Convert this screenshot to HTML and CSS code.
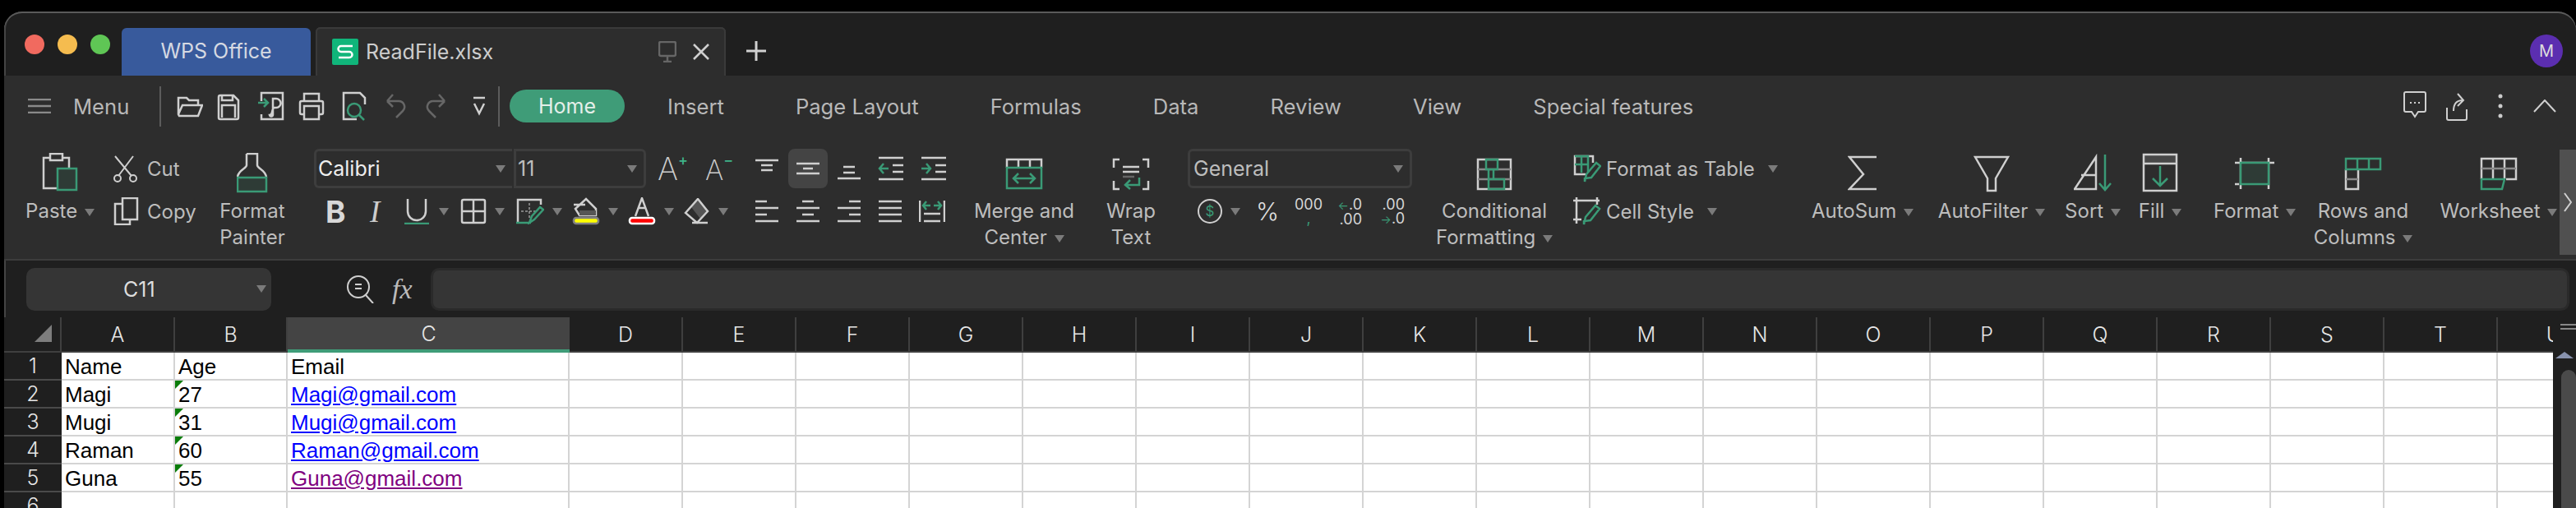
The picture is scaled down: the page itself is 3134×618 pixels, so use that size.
FILE: index.html
```html
<!DOCTYPE html>
<html lang="en">
<head>
  <meta charset="UTF-8">
  <title>ReadFile.xlsx</title>
  <link rel="stylesheet" href="styles.css">
</head>
<body>
<div class="window">

  <!-- title bar -->
  <div class="titlebar">
    <div class="lights"><i class="red"></i><i class="yellow"></i><i class="green"></i></div>
    <div class="tab-home">WPS Office</div>
    <div class="tab-file">
      <svg class="s-logo" width="32" height="32" viewBox="0 0 32 32"><rect width="32" height="32" rx="2" fill="#10b57a"/><path d="M25 9H11a3.5 3.5 0 0 0 0 7h10a3.500 3.500 0 0 1 0 7H8" fill="none" stroke="#fff" stroke-width="2.500"/></svg>
      <span class="file-name">ReadFile.xlsx</span>
      <svg class="pin" width="22" height="26" viewBox="0 0 22 26"><rect x="1" y="1" width="20" height="17" rx="2" class="ln dim"/><path d="M11 18v6M6 25h10" class="ln dim"/></svg>
      <svg class="close" width="20" height="20" viewBox="0 0 20 20"><path d="M1 1l18 18M19 1L1 19" class="ln"/></svg>
    </div>
    <svg class="plus" width="24" height="24" viewBox="0 0 24 24"><path d="M12 0v24M0 12h24" fill="none" stroke="#d0d0d0" stroke-width="3"/></svg>
    <div class="avatar">M</div>
  </div>

  <div class="ribbon">
    <!-- menu line -->
    <div class="nav">
      <svg class="burger" width="28" height="18" viewBox="0 0 28 18"><path d="M0 1h28M0 9h28M0 17h28" class="ln mid"/></svg>
      <span class="menu-text">Menu</span>
      <i class="sep"></i>
      <div class="quick">
        <svg width="32" height="36" viewBox="0 0 32 36"><path d="M2 28V8h10l3 3h11v6M2 28l5-11h24l-5 13H3z" class="ln"/></svg>
        <svg width="28" height="36" viewBox="0 0 28 36"><path d="M2 7a2 2 0 0 1 2-2h16l6 6v21a2 2 0 0 1-2 2H4a2 2 0 0 1-2-2zM6 5v6h13V5M6 32V17h16v15" class="ln"/></svg>
        <svg width="32" height="36" viewBox="0 0 32 36"><path d="M4 12V2h26v32H4v-6M14 29c4 0 2-5 5-9h3a5 5 0 0 0 0-11h-4v19a2 2 0 0 1-4 1z" class="ln"/><path d="M0 14h11M7 9l5 5-5 5" class="ln gr"/></svg>
        <svg width="32" height="36" viewBox="0 0 32 36"><path d="M7 12V3h18v9M7 28H4a2 2 0 0 1-2-2V14a2 2 0 0 1 2-2h24a2 2 0 0 1 2 2v12a2 2 0 0 1-2 2h-3M7 18h18v16H7z" class="ln"/></svg>
        <svg width="30" height="36" viewBox="0 0 30 36"><path d="M18 34H2V2h20l6 6v8" class="ln"/><circle cx="15" cy="23" r="8" class="ln gr"/><path d="M21 29l6 6" class="ln gr"/></svg>
        <svg width="24" height="36" viewBox="0 0 24 36"><path d="M1 12h14a7 7 0 0 1 5 12l-8 8M1 12l7-8M1 12l7 7" class="ln dim"/></svg>
        <svg width="24" height="36" viewBox="0 0 24 36"><path d="M23 12H9a7 7 0 0 0-5 12l8 8M23 12l-7-8M23 12l-7 7" class="ln dim"/></svg>
        <svg width="16" height="36" viewBox="0 0 16 36"><path d="M1 8h14M2 15l6 12 6-12" class="ln"/></svg>
      </div>
      <i class="sep"></i>
      <span class="pill">Home</span>
      <span class="nav-tab first">Insert</span>
      <span class="nav-tab">Page Layout</span>
      <span class="nav-tab">Formulas</span>
      <span class="nav-tab">Data</span>
      <span class="nav-tab">Review</span>
      <span class="nav-tab">View</span>
      <span class="nav-tab">Special features</span>
      <div class="nav-right">
        <svg width="28" height="36" viewBox="0 0 28 36"><path d="M3 1h22a2 2 0 0 1 2 2v20a2 2 0 0 1-2 2h-7l-4 6-4-6H3a2 2 0 0 1-2-2V3a2 2 0 0 1 2-2z" class="ln thin"/><path d="M8 14h2M13 14h2M18 14h2" class="ln thin"/></svg>
        <svg class="share" width="26" height="36" viewBox="0 0 26 36"><path d="M1 20v13a2 2 0 0 0 2 2h20a2 2 0 0 0 2-2V22M9 24c0-9 4-13 11-13M14 3l7 8-7 7" class="ln thin"/></svg>
        <svg class="wide" width="6" height="30" viewBox="0 0 6 30"><circle cx="3" cy="3" r="2.500" fill="#ccc"/><circle cx="3" cy="15" r="2.500" fill="#ccc"/><circle cx="3" cy="27" r="2.500" fill="#ccc"/></svg>
        <svg class="wide" width="28" height="16" viewBox="0 0 28 16"><path d="M1 15L14 1l13 14" class="ln thin"/></svg>
      </div>
    </div>

    <!-- tool groups -->
    <div class="tools">
      <div class="big">
        <svg width="44" height="50" viewBox="0 0 44 50"><path d="M10 6H2v37h18M25 6h8v13M10 1h15v8H10z" class="ln"/><rect x="19" y="19" width="23" height="26" class="ln gr box"/></svg>
        <div class="lbl">Paste <i class="arr"></i></div>
      </div>

      <div class="clip">
        <div class="row">
          <svg width="32" height="34" viewBox="0 0 32 34"><path d="M2 2l20 24M24 2L6 26" class="ln thin"/><circle cx="5" cy="29" r="4" class="ln thin"/><circle cx="24" cy="29" r="4" class="ln thin"/></svg>
          <span>Cut</span>
        </div>
        <div class="row">
          <svg width="32" height="34" viewBox="0 0 32 34"><path d="M11 1h18v26H11zM11 8H2v25h18v-6" class="ln"/></svg>
          <span>Copy</span>
        </div>
      </div>

      <div class="big">
        <svg width="38" height="50" viewBox="0 0 38 50"><path d="M12 1h13v14c0 4 11 6 11 15M12 1v14C12 19 1 21 1 30" class="ln"/><rect x="1" y="30" width="35" height="17" class="ln gr box"/></svg>
        <div class="lbl">Format</div>
        <div class="lbl">Painter</div>
      </div>

      <div class="font-group">
        <div class="row font-row">
          <div class="select font-name"><span>Calibri</span><i class="arr"></i></div>
          <div class="select font-size"><span>11</span><i class="arr"></i></div>
          <span class="grow-a">A<b>+</b></span>
          <span class="shrink-a">A<b>−</b></span>
        </div>
        <div class="row fmt-row">
          <span class="bold">B</span>
          <span class="ital">I</span>
          <span class="drop under">
            <svg width="32" height="32" viewBox="0 0 32 32"><path d="M4 1v15a11 11 0 0 0 22 0V1" class="ln"/><path d="M0 31h30" class="ln gr"/></svg><i class="arr"></i>
          </span>
          <span class="drop">
            <svg width="32" height="32" viewBox="0 0 32 32"><rect x="2" y="2" width="28" height="28" rx="2" class="ln"/><path d="M16 2v28M2 16h28" class="ln"/></svg><i class="arr"></i>
          </span>
          <span class="drop">
            <svg width="34" height="32" viewBox="0 0 34 32"><path d="M2 29V2h28v6" class="ln"/><path d="M6 16h20M16 6v20" class="ln dash"/><path d="M0 30h18M16 30l3-8 10-11 4 3-11 12z" class="ln gr"/></svg><i class="arr"></i>
          </span>
          <span class="drop">
            <svg width="34" height="34" viewBox="0 0 34 34"><path d="M4 14l13-12 12 12v8H9zM2 9h14" class="ln"/><path d="M9 16h20v6H9z" fill="#555"/><rect x="2" y="25" width="30" height="7" rx="3" fill="#ff0" stroke="#808080" stroke-width="2.500"/></svg><i class="arr"></i>
          </span>
          <span class="drop">
            <svg width="34" height="34" viewBox="0 0 34 34"><path d="M9 23L17 1l8 22M12 13h10" class="ln"/><rect x="2" y="25" width="30" height="7" rx="3" fill="#f00" stroke="#fff" stroke-width="2.500"/></svg><i class="arr"></i>
          </span>
          <span class="drop">
            <svg width="32" height="32" viewBox="0 0 32 32"><path d="M17 1l12 15-9 9L9 11z" fill="#555"/><path d="M2 18L17 1l12 15-13 14zM10 30h19" class="ln"/></svg><i class="arr"></i>
          </span>
        </div>
      </div>

      <div class="align-group">
        <div class="row">
          <svg width="30" height="32" viewBox="0 0 30 32"><path d="M1 6h28M8 12h14M8 18h14" class="ln"/></svg>
          <span class="align-on"><svg width="30" height="32" viewBox="0 0 30 32"><path d="M1 10h28M9 16h12M1 22h28" class="ln"/></svg></span>
          <svg width="30" height="32" viewBox="0 0 30 32"><path d="M8 14h14M8 21h14M1 28h28" class="ln"/></svg>
          <svg width="32" height="32" viewBox="0 0 32 32"><path d="M1 3h30M18 12h13M18 20h13M1 29h30" class="ln"/><path d="M13 16H2M7 10l-5 6 5 6" class="ln gr"/></svg>
          <svg width="32" height="32" viewBox="0 0 32 32"><path d="M1 3h30M18 12h13M18 20h13M1 29h30" class="ln"/><path d="M1 16h11M7 10l5 6-5 6" class="ln gr"/></svg>
        </div>
        <div class="row">
          <svg width="30" height="30" viewBox="0 0 30 30"><path d="M1 3h14M1 11h28M1 19h14M1 27h28" class="ln"/></svg>
          <svg width="30" height="30" viewBox="0 0 30 30"><path d="M8 3h14M1 11h28M8 19h14M1 27h28" class="ln"/></svg>
          <svg width="30" height="30" viewBox="0 0 30 30"><path d="M15 3h14M1 11h28M15 19h14M1 27h28" class="ln"/></svg>
          <svg width="30" height="30" viewBox="0 0 30 30"><path d="M1 3h28M1 11h28M1 19h28M1 27h28" class="ln"/></svg>
          <svg width="32" height="30" viewBox="0 0 32 30"><path d="M1 2v26M31 2v26M6 18h20M6 27h20" class="ln"/><path d="M5 8h9M9 3L5 8l4 5M18 8h9M23 3l4 5-4 5" class="ln gr"/></svg>
        </div>
      </div>

      <div class="big">
        <svg width="46" height="50" viewBox="0 0 46 50"><path d="M2 18V8h42v10M16 8v10M30 8v10" class="ln"/><rect x="2" y="18" width="42" height="25" class="ln gr"/><path d="M11 31h24M16 25l-6 6 6 6M30 25l6 6-6 6" class="ln gr"/></svg>
        <div class="lbl">Merge and</div>
        <div class="lbl">Center <i class="arr"></i></div>
      </div>

      <div class="big">
        <svg width="46" height="50" viewBox="0 0 46 50"><path d="M9 8H2v10M37 8h7v10M2 34v10h7M44 34v10h-7M13 17h20M13 23h20" class="ln"/><path d="M13 29h14" class="ln dim"/><path d="M33 30v9H17M22 33l-6 6 6 5" class="ln gr"/></svg>
        <div class="lbl">Wrap</div>
        <div class="lbl">Text</div>
      </div>

      <div class="number-group">
        <div class="row">
          <div class="select num-format"><span>General</span><i class="arr"></i></div>
        </div>
        <div class="row num-row">
          <span class="drop dollar"><span class="dollar-sign">$</span><i class="arr"></i></span>
          <span class="percent">%</span>
          <span class="stack thousands">000<br><b>,</b></span>
          <span class="stack dec"><b>←</b>.0<br>.00</span>
          <span class="stack dec right">.00<br><b>→</b>.0</span>
        </div>
      </div>

      <div class="big">
        <svg width="44" height="50" viewBox="0 0 44 50"><rect x="2" y="8" width="40" height="36" class="ln"/><path d="M2 20h40M2 32h40" class="ln mid"/><path d="M12 8h14v12H12zM15 20h6v12h-6zM15 32h19v12H15z" class="ln gr"/></svg>
        <div class="lbl">Conditional</div>
        <div class="lbl">Formatting <i class="arr"></i></div>
      </div>

      <div class="style-group">
        <div class="row">
          <svg width="34" height="34" viewBox="0 0 34 34"><path d="M15 24H2V2h22v8" class="ln"/><path d="M2 12h16M2 2h16v20M10 2v20" class="ln gr"/><path d="M14 33l2-9 12-14 5 4-11 14-8 1z" class="ln gr"/></svg>
          <span>Format as Table</span><i class="arr"></i>
        </div>
        <div class="row">
          <svg width="34" height="34" viewBox="0 0 34 34"><path d="M0 4h32M4 0v32M29 0v9M0 27h10" class="ln"/><path d="M13 33l2-9 12-14 5 4-11 14-8 1z" class="ln gr"/></svg>
          <span>Cell Style</span><i class="arr"></i>
        </div>
      </div>

      <div class="big">
        <svg width="36" height="50" viewBox="0 0 36 50"><path d="M35 5H2l17 21L2 44h33" class="ln"/></svg>
        <div class="lbl">AutoSum <i class="arr"></i></div>
      </div>
      <div class="big">
        <svg width="44" height="50" viewBox="0 0 44 50"><path d="M2 5h40L27 31v15H17V31z" class="ln"/></svg>
        <div class="lbl">AutoFilter <i class="arr"></i></div>
      </div>
      <div class="big">
        <svg width="46" height="50" viewBox="0 0 46 50"><path d="M1 44h26V5zM9 27h18" class="ln"/><path d="M38 2v43M31 37l7 8 7-8" class="ln gr"/></svg>
        <div class="lbl">Sort <i class="arr"></i></div>
      </div>
      <div class="big">
        <svg width="44" height="50" viewBox="0 0 44 50"><path d="M2 2h40v11H2z" fill="#484848"/><rect x="2" y="2" width="40" height="44" class="ln"/><path d="M2 13h40" class="ln"/><path d="M22 16v24M13 31l9 9 9-9" class="ln gr"/></svg>
        <div class="lbl">Fill <i class="arr"></i></div>
      </div>
      <div class="big">
        <svg width="48" height="50" viewBox="0 0 48 50"><path d="M7 6v38M41 6v38M0 12h48M0 38h5" class="ln"/><rect x="7" y="12" width="34" height="26" class="ln gr box"/></svg>
        <div class="lbl">Format <i class="arr"></i></div>
      </div>
      <div class="big">
        <svg width="46" height="50" viewBox="0 0 46 50"><path d="M2 20v24h15V20" class="ln"/><path d="M2 32h15" class="ln mid"/><path d="M2 7h42v13H2zM16 7v13M30 7v13" class="ln gr"/></svg>
        <div class="lbl">Rows and</div>
        <div class="lbl">Columns <i class="arr"></i></div>
      </div>
      <div class="big worksheet">
        <svg width="46" height="50" viewBox="0 0 46 50"><path d="M2 32V7h42v25H32M16 7v25M30 7v25" class="ln"/><path d="M2 19h42" class="ln mid"/><path d="M2 32h28l-3 12H2z" class="ln gr"/></svg>
        <div class="lbl">Worksheet <i class="arr"></i></div>
      </div>
    </div>

    <div class="more"><svg width="10" height="24" viewBox="0 0 10 24"><path d="M1 1l8 11-8 11" class="ln thin"/></svg></div>
  </div>

  <!-- formula bar -->
  <div class="formula">
    <div class="name-box"><span>C11</span><i class="arr"></i></div>
    <svg class="lookup" width="34" height="34" viewBox="0 0 34 34"><circle cx="14" cy="14" r="13" class="ln thin"/><path d="M10 11h8M10 16h8" class="ln thin"/><path d="M23 24l9 10" class="ln thin"/></svg>
    <span class="fx">fx</span>
    <div class="formula-input"></div>
  </div>

  <!-- sheet -->
  <div class="sheet">
    <div class="grid-wrap">
      <table class="grid">
        <colgroup>
          <col class="c-rowhead"><col class="c-a"><col class="c-b"><col class="c-c">
          <col class="c-n"><col class="c-n"><col class="c-n"><col class="c-n"><col class="c-n"><col class="c-n"><col class="c-n"><col class="c-n"><col class="c-n"><col class="c-n"><col class="c-n"><col class="c-n"><col class="c-n"><col class="c-n"><col class="c-n"><col class="c-n"><col class="c-n"><col class="c-n">
        </colgroup>
        <thead>
          <tr>
            <th class="corner"><i></i></th><th>A</th><th>B</th><th class="sel">C</th><th>D</th><th>E</th><th>F</th><th>G</th><th>H</th><th>I</th><th>J</th><th>K</th><th>L</th><th>M</th><th>N</th><th>O</th><th>P</th><th>Q</th><th>R</th><th>S</th><th>T</th><th>U</th>
          </tr>
        </thead>
        <tbody>
          <tr><th>1</th><td>Name</td><td>Age</td><td>Email</td><td></td><td></td><td></td><td></td><td></td><td></td><td></td><td></td><td></td><td></td><td></td><td></td><td></td><td></td><td></td><td></td><td></td><td></td></tr>
          <tr><th>2</th><td>Magi</td><td class="flag">27</td><td><a class="link">Magi@gmail.com</a></td><td></td><td></td><td></td><td></td><td></td><td></td><td></td><td></td><td></td><td></td><td></td><td></td><td></td><td></td><td></td><td></td><td></td><td></td></tr>
          <tr><th>3</th><td>Mugi</td><td class="flag">31</td><td><a class="link">Mugi@gmail.com</a></td><td></td><td></td><td></td><td></td><td></td><td></td><td></td><td></td><td></td><td></td><td></td><td></td><td></td><td></td><td></td><td></td><td></td><td></td></tr>
          <tr><th>4</th><td>Raman</td><td class="flag">60</td><td><a class="link">Raman@gmail.com</a></td><td></td><td></td><td></td><td></td><td></td><td></td><td></td><td></td><td></td><td></td><td></td><td></td><td></td><td></td><td></td><td></td><td></td><td></td></tr>
          <tr><th>5</th><td>Guna</td><td class="flag">55</td><td><a class="link visited">Guna@gmail.com</a></td><td></td><td></td><td></td><td></td><td></td><td></td><td></td><td></td><td></td><td></td><td></td><td></td><td></td><td></td><td></td><td></td><td></td><td></td></tr>
          <tr><th>6</th><td></td><td></td><td></td><td></td><td></td><td></td><td></td><td></td><td></td><td></td><td></td><td></td><td></td><td></td><td></td><td></td><td></td><td></td><td></td><td></td><td></td></tr>
        </tbody>
      </table>
    </div>
    <div class="vscroll">
      <div class="split"></div>
      <div class="up"></div>
      <div class="thumb"></div>
    </div>
  </div>

</div>
</body>
</html>
```

FILE: styles.css
```css
html, body {
  margin: 0;
  height: 618px;
  overflow: hidden;
  background: #000;
  font-family: "Inter", "Noto Sans", sans-serif;
}

.window {
  margin: 14px 0 0 5px;
  height: 604px;
  display: flex;
  flex-direction: column;
  background: #1f1f1f;
  border-radius: 22px 22px 0 0;
  box-shadow: inset 0 2px 0 #5a5a5a, inset 2px 0 0 #444;
  overflow: hidden;
}

/* line icons */
.ln {
  fill: none;
  stroke: #cfcfcf;
  stroke-width: 2.5;
}
.ln.thin { stroke-width: 2; }
.ln.gr { stroke: #3a9a76; }
.ln.dim { stroke: #666; }
.ln.mid { stroke: #8a8a8a; }
.ln.box { fill: #2e3b36; }
.ln.dash { stroke-dasharray: 3 2; stroke: #999; stroke-width: 1.500; }

/* little dropdown triangle */
.arr {
  display: inline-block;
  width: 0;
  height: 0;
  border-left: 6px solid transparent;
  border-right: 6px solid transparent;
  border-top: 9px solid #7b7b7b;
  vertical-align: middle;
}

/* title bar */
.titlebar {
  height: 78px;
  flex: none;
  display: flex;
  align-items: flex-end;
  box-sizing: border-box;
}
.lights {
  display: flex;
  gap: 16px;
  padding: 0 0 26px 25px;
}
.lights i {
  width: 24px;
  height: 24px;
  border-radius: 50%;
}
.lights .red { background: #f16a5f; }
.lights .yellow { background: #f5bc4f; }
.lights .green { background: #5fc655; }
.tab-home {
  margin-left: 14px;
  width: 230px;
  height: 58px;
  background: #385a9c;
  border-radius: 6px 6px 0 0;
  color: #d5d9e2;
  font-size: 25px;
  text-align: center;
  line-height: 56px;
}
.tab-file {
  margin-left: 6px;
  width: 499px;
  height: 59px;
  box-sizing: border-box;
  display: flex;
  align-items: center;
  padding: 0 20px 0 20px;
  background: #2d2d2d;
  border-radius: 6px 6px 0 0;
  box-shadow: inset 0 2px 0 #3a3a3a, inset 2px 0 0 #3a3a3a, inset -2px 0 0 #3a3a3a;
  color: #cdcdcd;
  font-size: 25px;
}
.file-name {
  margin-left: 9px;
  flex: 1;
}
.close { margin-left: 20px; }
.plus {
  margin: 0 0 18px 25px;
}
.avatar {
  margin: 0 16px 10px auto;
  width: 40px;
  height: 40px;
  border-radius: 50%;
  background: #5b2eb0;
  color: #ddd;
  font-size: 20px;
  line-height: 40px;
  text-align: center;
}

/* ribbon */
.ribbon {
  position: relative;
  flex: none;
  height: 225px;
  box-sizing: border-box;
  background: #2d2d2d;
  border-bottom: 2px solid #3c3c3c;
  color: #bdbdbd;
  font-size: 24px;
}
.nav {
  height: 74px;
  display: flex;
  align-items: center;
  padding-left: 29px;
  color: #b8b8b8;
  font-size: 25.6px;
}
.menu-text {
  margin-left: 27px;
  width: 105px;
}
.sep {
  width: 2px;
  height: 49px;
  background: #5c5c5c;
}
.quick {
  display: grid;
  grid-template-columns: 49px 50px 49px 53px 54px 48px 57px 31px;
  align-items: center;
  margin-left: 19px;
}
.pill {
  margin-left: 12px;
  height: 40px;
  line-height: 40px;
  padding: 0 35px;
  border-radius: 20px;
  background: #3f9c78;
  color: #e4efe9;
  font-size: 25px;
}
.nav-tab { margin-left: 87px; }
.nav-tab.first { margin-left: 52px; }
.nav-right {
  margin-left: auto;
  display: flex;
  align-items: center;
  padding-right: 24px;
}
.share { margin-left: 24px; }
.wide { margin-left: 37px; }

.tools {
  display: grid;
  grid-template-columns: 96px 149px 74px 556px 270px 152px 108px 300px 176px 284px 152px 162px 84px 80px 150px 114px 182px;
  padding: 13px 0 0 20px;
}
.row {
  height: 52px;
  display: flex;
  align-items: center;
}
.big {
  display: flex;
  flex-direction: column;
  align-items: center;
  padding-top: 7px;
  white-space: nowrap;
}
.big svg { margin-bottom: 5px; }
.lbl {
  height: 32px;
  line-height: 32px;
}
.lbl .arr { margin-left: 2px; }
.worksheet { padding-left: 34px; }

.clip { padding-left: 17px; }
.clip span { margin-left: 9px; }

/* font box */
.font-group { padding-left: 38px; }
.select {
  height: 48px;
  box-sizing: border-box;
  display: flex;
  align-items: center;
  justify-content: space-between;
  border: 3px solid #3d3d3d;
  padding: 0 8px 0 2px;
  font-size: 25px;
}
.font-name {
  width: 241px;
  border-radius: 6px 0 0 6px;
  border-right: none;
  color: #eee;
}
.font-size {
  width: 161px;
  border-radius: 0 6px 6px 0;
  margin-left: 2px;
}
.grow-a, .shrink-a {
  font-size: 38px;
  font-weight: 200;
  color: #ccc;
}
.grow-a { margin-left: 14px; }
.shrink-a { margin-left: 21px; font-size: 34px; }
.grow-a b, .shrink-a b {
  color: #3fb58a;
  font-size: 18px;
  font-weight: 500;
  vertical-align: 18px;
}
.fmt-row { padding-left: 14px; }
.bold {
  width: 54px;
  font-size: 37px;
  font-weight: 700;
  color: #d8d8d8;
}
.ital {
  width: 42px;
  font-family: "Liberation Serif", serif;
  font-style: italic;
  font-size: 37px;
  color: #ccc;
}
.drop {
  display: flex;
  align-items: center;
  gap: 10px;
  width: 68px;
}

/* alignment */
.align-group { padding-left: 18px; }
.align-group .row { gap: 20px; }
.align-on {
  width: 48px;
  height: 48px;
  margin: 0 -9px;
  display: flex;
  align-items: center;
  justify-content: center;
  background: #444;
  border-radius: 8px;
}

/* number */
.number-group { padding-left: 15px; }
.num-format {
  width: 273px;
  padding-left: 4px;
  border-radius: 6px;
  color: #bdbdbd;
}
.num-row { padding-left: 12px; }
.dollar { width: 71px; }
.dollar-sign {
  width: 26px;
  height: 26px;
  line-height: 26px;
  flex: none;
  border: 2px solid #cfcfcf;
  border-radius: 50%;
  text-align: center;
  color: #3a9a76;
  font-size: 17px;
}
.percent {
  width: 46px;
  font-size: 30px;
  font-weight: 300;
  color: #ddd;
}
.stack {
  font-size: 18px;
  line-height: 17px;
  color: #d6d6d6;
  white-space: nowrap;
  text-align: right;
}
.stack b {
  font-size: 14px;
  font-weight: 400;
  color: #3a9a76;
}
.thousands {
  width: 36px;
  text-align: center;
}
.thousands b { font-size: 18px; }
.dec {
  width: 32px;
  margin-left: 15px;
}
.dec.right { margin-left: 20px; }

/* table styles */
.style-group { padding-left: 8px; }
.style-group span { margin: 0 16px 0 6px; }

.more {
  position: absolute;
  right: 0;
  top: 90px;
  width: 20px;
  height: 128px;
  background: #505050;
  display: flex;
  align-items: center;
  justify-content: center;
}

/* formula bar */
.formula {
  flex: none;
  height: 69px;
  display: flex;
  align-items: center;
  padding: 0 8px 0 27px;
  box-sizing: border-box;
}
.name-box {
  width: 298px;
  height: 52px;
  display: flex;
  align-items: center;
  box-sizing: border-box;
  padding: 0 6px 0 118px;
  justify-content: space-between;
  background: #353535;
  border-radius: 10px;
  color: #ddd;
  font-size: 25px;
}
.lookup { margin-left: 92px; }
.fx {
  width: 47px;
  margin-left: 21px;
  font-family: "Liberation Serif", serif;
  font-style: italic;
  font-size: 34px;
  color: #bbb;
}
.formula-input {
  flex: 1;
  height: 52px;
  box-sizing: border-box;
  background: #353535;
  border: 3px solid #2a2a2a;
  border-radius: 10px;
}

/* sheet */
.sheet {
  flex: 1;
  display: flex;
  min-height: 0;
}
.grid-wrap {
  flex: 1;
  overflow: hidden;
}
.grid {
  table-layout: fixed;
  width: 3172px;
  border-collapse: separate;
  border-spacing: 0;
}
.c-rowhead { width: 70px; }
.c-a { width: 138px; }
.c-b { width: 137px; }
.c-c { width: 343px; }
.c-n { width: 138px; }

.grid thead th {
  height: 43px;
  padding: 0;
  background: #1f1f1f;
  border-right: 2px solid #3f3f3f;
  border-bottom: 2px solid #3f3f3f;
  box-sizing: border-box;
  color: #e6e6e6;
  font-size: 25px;
  font-weight: 300;
}
.grid thead th.sel {
  background: #444;
  border-bottom: 4px solid #3f9c78;
  border-right: none;
}
.grid thead th.corner {
  text-align: right;
  padding-right: 10px;
  border-right: 2px solid #3f3f3f;
}
.corner i {
  display: inline-block;
  width: 0;
  height: 0;
  margin-top: 4px;
  border-left: 21px solid transparent;
  border-bottom: 21px solid #7d7d7d;
}
.grid tbody th {
  height: 34px;
  padding: 0;
  box-sizing: border-box;
  background: #1f1f1f;
  border-bottom: 2px solid #4a4a4a;
  color: #e6e6e6;
  font-size: 25px;
  font-weight: 300;
}
.grid td {
  position: relative;
  height: 34px;
  box-sizing: border-box;
  padding: 1px 4px 0;
  background: #fff;
  border-right: 2px solid #d4d4d4;
  border-bottom: 2px solid #d4d4d4;
  color: #000;
  font-family: "Liberation Sans", Arial, sans-serif;
  font-size: 26px;
  line-height: 30px;
  white-space: nowrap;
}
.link {
  color: #00f;
  text-decoration: underline;
}
.link.visited { color: #800080; }
.flag::before {
  content: "";
  position: absolute;
  left: 0;
  top: 0;
  border-top: 10px solid #0a7d0a;
  border-right: 10px solid transparent;
}

/* scrollbar at the right */
.vscroll {
  flex: none;
  width: 28px;
  background: #1f1f1f;
  display: flex;
  flex-direction: column;
  align-items: flex-end;
}
.split {
  width: 19px;
  height: 7px;
  margin-top: 8px;
  border-top: 2px solid #888;
  border-bottom: 2px solid #888;
  box-sizing: border-box;
}
.up {
  margin: 27px 3px 0 0;
  border-left: 11px solid transparent;
  border-right: 11px solid transparent;
  border-bottom: 8px solid #8892ad;
}
.thumb {
  width: 18px;
  flex: 1;
  margin-top: 14px;
  background: #4a4a4a;
  border-radius: 9px 9px 0 0;
}
```
